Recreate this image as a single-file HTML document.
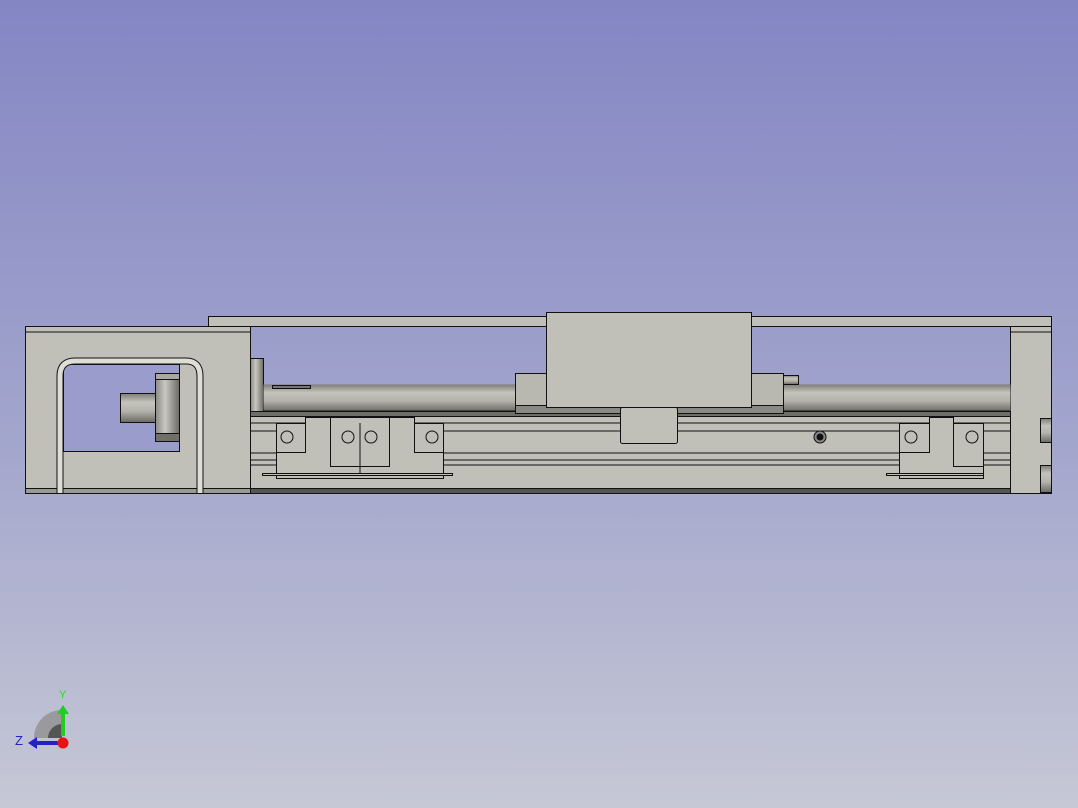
<!DOCTYPE html>
<html><head><meta charset="utf-8"><style>
html,body{margin:0;padding:0;width:1078px;height:808px;overflow:hidden}
body{background:linear-gradient(#8486c4,#a3a6cc 55%,#c6c8d6)}
svg{position:absolute;left:0;top:0}
</style></head><body>
<svg width="1078" height="808" viewBox="0 0 1078 808" xmlns="http://www.w3.org/2000/svg">
<defs>
<linearGradient id="cyl" x1="0" y1="0" x2="0" y2="1">
<stop offset="0" stop-color="#7e7e78"/><stop offset=".3" stop-color="#c4c4bc"/><stop offset=".6" stop-color="#b4b4ac"/><stop offset="1" stop-color="#6a6a64"/></linearGradient>
<linearGradient id="cylv" x1="0" y1="0" x2="1" y2="0">
<stop offset="0" stop-color="#8a8a84"/><stop offset=".4" stop-color="#c8c8c0"/><stop offset="1" stop-color="#6a6a64"/></linearGradient>
</defs>
<g stroke="#111" stroke-width="1" fill="#c0c0b8">
<rect x="208.5" y="316.5" width="843" height="10"/>
<rect x="25.5" y="326.5" width="225" height="167"/>
<line x1="25" y1="332" x2="250" y2="332"/>
<rect x="25.5" y="488.5" width="225" height="5" fill="#9a9a94"/>
<rect x="63.5" y="364.5" width="116" height="87" fill="#9a9ccb"/>
<rect x="120.5" y="393.5" width="36" height="29" fill="url(#cyl)"/>
<rect x="155.5" y="373.5" width="24" height="68" fill="url(#cylv)"/>
<rect x="155.5" y="373.5" width="24" height="6" fill="#a8a8a0"/>
<rect x="155.5" y="433.5" width="24" height="8" fill="#707068"/>
<path d="M60 493 V376 Q60 361 75 361 H186 Q200 361 200 376 V493" fill="none" stroke="#111" stroke-width="7"/>
<path d="M60 493 V376 Q60 361 75 361 H186 Q200 361 200 376 V493" fill="none" stroke="#deded6" stroke-width="5"/>
<rect x="1010.5" y="326.5" width="41" height="167"/>
<line x1="1010" y1="332" x2="1052" y2="332"/>
<rect x="1040.5" y="418.5" width="11" height="24" fill="url(#cyl)"/>
<rect x="1040.5" y="465.5" width="11" height="27" fill="url(#cyl)"/>
<rect x="250.5" y="358.5" width="13" height="53" fill="url(#cylv)"/>
<rect x="263.5" y="384.5" width="747" height="27" fill="url(#cyl)" stroke="none"/>
<line x1="263" y1="411" x2="1010" y2="411"/>
<rect x="272.5" y="385.5" width="38" height="3" fill="#777"/>
<rect x="250.5" y="411.5" width="760" height="82"/>
<rect x="250.5" y="411.5" width="760" height="5" fill="#6e6e68"/>
<line x1="250" y1="423" x2="1010" y2="423"/>
<line x1="250" y1="431" x2="1010" y2="431"/>
<line x1="250" y1="453" x2="1010" y2="453"/>
<line x1="250" y1="460" x2="1010" y2="460"/>
<line x1="250" y1="465" x2="1010" y2="465"/>
<rect x="250.5" y="488.5" width="760" height="5" fill="#555"/>
<rect x="515.5" y="373.5" width="268" height="40" fill="#b8b8b0"/>
<rect x="515.5" y="405.5" width="268" height="8" fill="#8a8a84"/>
<rect x="783.5" y="375.5" width="15" height="9" fill="url(#cyl)"/>
<rect x="546.5" y="312.5" width="205" height="95"/>
<rect x="620.5" y="407.5" width="57" height="36" rx="2"/>
<path d="M276.5 423.5 H305.5 V417.5 H414.5 V423.5 H443.5 V478.5 H276.5 Z"/>
<path d="M276.5 452.5 H305.5 V417.5 M330.5 417.5 V466.5 H389.5 V417.5 M360 423 V478 M414.5 417.5 V452.5 H443.5" fill="none"/>
<rect x="262.5" y="473.5" width="190" height="2" fill="#c0c0b8"/>
<rect x="276.5" y="475.5" width="167" height="3" fill="#c0c0b8"/>
<path d="M899.5 423.5 H929.5 V417.5 H953.5 V423.5 H983.5 V478.5 H899.5 Z"/>
<path d="M899.5 452.5 H929.5 V417.5 M953.5 417.5 V466.5 H983.5" fill="none"/>
<rect x="886.5" y="473.5" width="97" height="2" fill="#c0c0b8"/>
<rect x="899.5" y="475.5" width="84" height="3" fill="#c0c0b8"/>
<g fill="none"><circle cx="287" cy="437" r="6"/><circle cx="348" cy="437" r="6"/><circle cx="371" cy="437" r="6"/><circle cx="432" cy="437" r="6"/><circle cx="911" cy="437" r="6"/><circle cx="972" cy="437" r="6"/></g>
<circle cx="820" cy="437" r="6" fill="#888"/><circle cx="820" cy="437" r="3" fill="#111"/>
</g>
<path d="M34 738 A28 28 0 0 1 62 710 V738 Z" fill="#9a9a9e"/>
<path d="M48 738 A14 14 0 0 1 62 724 V738 Z" fill="#555"/>
<rect x="61" y="712" width="4" height="24" fill="#2c2"/>
<polygon points="57,714 63,705 69,714" fill="#2c2"/>
<rect x="36" y="741" width="24" height="4" fill="#22c"/>
<polygon points="37,737 28,743 37,749" fill="#22c"/>
<circle cx="63" cy="743" r="5.5" fill="#e11"/>
<text x="59" y="698" font-family="Liberation Sans,sans-serif" font-size="11" fill="#2d2">Y</text>
<text x="15" y="745" font-family="Liberation Sans,sans-serif" font-size="13" fill="#22c">Z</text>
</svg>
</body></html>
